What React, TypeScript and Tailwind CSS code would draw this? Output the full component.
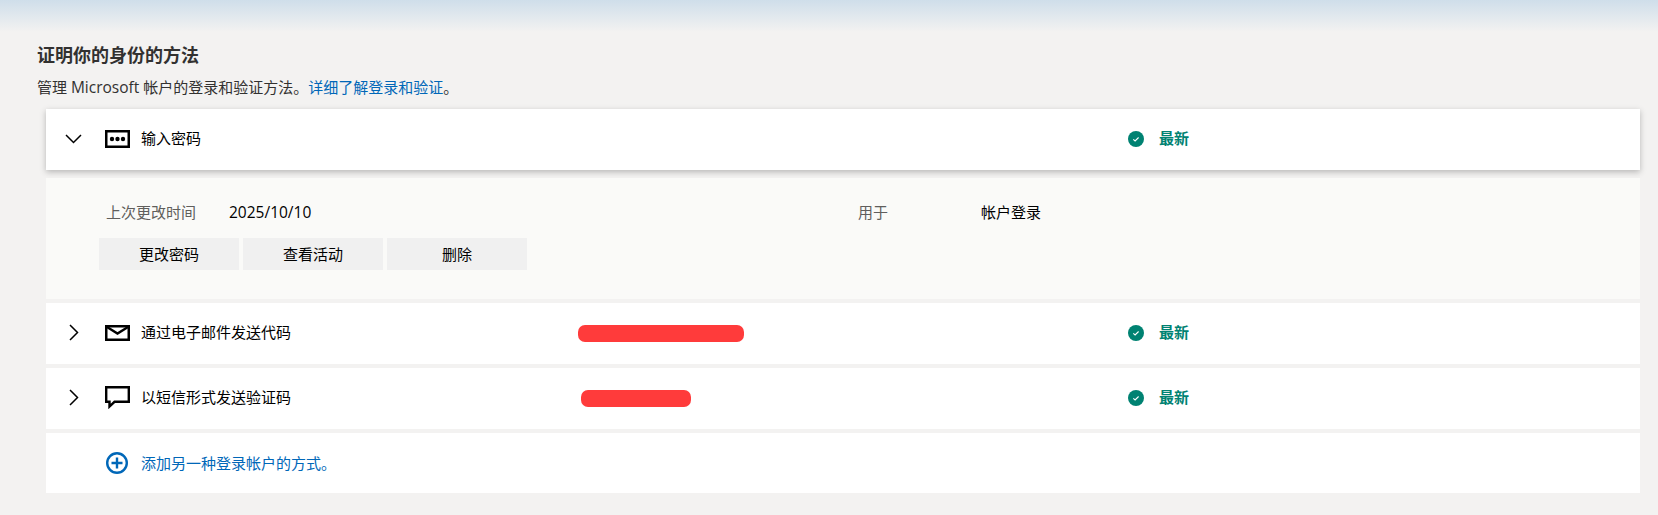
const CJK = `font-['Open_Sans','Noto_Sans_CJK_SC',sans-serif]`

function ChevronDown() {
  return (
    <svg width="17" height="10" viewBox="0 0 17 10" fill="none" stroke="#000" strokeWidth="1.5">
      <path d="M1 1l7.5 7.5L16 1" />
    </svg>
  )
}

function ChevronRight() {
  return (
    <svg width="10" height="17" viewBox="0 0 10 17" fill="none" stroke="#000" strokeWidth="1.5">
      <path d="M1 1l7.5 7.5L1 16" />
    </svg>
  )
}

function PasswordIcon() {
  return (
    <svg width="25" height="18" viewBox="0 0 25 18">
      <rect x="1.25" y="1.25" width="22.5" height="15.5" fill="none" stroke="#000" strokeWidth="2.5" />
      <circle cx="7" cy="9" r="2.2" />
      <circle cx="12.5" cy="9" r="2.2" />
      <circle cx="18" cy="9" r="2.2" />
    </svg>
  )
}

function MailIcon() {
  return (
    <svg width="25" height="16" viewBox="0 0 25 16" fill="none" stroke="#000">
      <rect x="1.25" y="1.25" width="22.5" height="13.5" strokeWidth="2.5" />
      <path d="M2 2l10.5 6.5L23 2" strokeWidth="2.4" />
    </svg>
  )
}

function ChatIcon() {
  return (
    <svg width="25" height="23" viewBox="0 0 25 23" fill="none" stroke="#000" strokeWidth="2.4">
      <path d="M1.2 1.2h22.6v14.6H9.5L4.5 20.5v-4.7H1.2z" />
    </svg>
  )
}

function PlusIcon() {
  return (
    <svg width="22" height="22" viewBox="0 0 22 22" fill="none" stroke="#0067b8">
      <circle cx="11" cy="11" r="9.8" strokeWidth="2.4" />
      <path d="M11 5.5v11M5.5 11h11" strokeWidth="2.4" />
    </svg>
  )
}

function CheckBadge() {
  return (
    <svg width="16" height="16" viewBox="0 0 16 16">
      <circle cx="8" cy="8" r="8" fill="#008272" />
      <path d="M5.3 8.3l1.8 1.6 3.5-3.4" fill="none" stroke="#fff" strokeWidth="1.1" />
    </svg>
  )
}

type MethodRowProps = {
  open?: boolean
  icon: React.ReactNode
  title: string
  // redacted value: width of the blot, offset from the column start
  blot?: string
  raised?: boolean
}

function MethodRow({ open, icon, title, blot, raised }: MethodRowProps) {
  return (
    <div className={`flex h-[61px] items-center bg-white pb-[2px] ${raised ? 'shadow-[0_2px_6px_rgba(0,0,0,0.25)]' : ''}`}>
      <div className="flex w-[59px] justify-center pr-[4px]">{open ? <ChevronDown /> : <ChevronRight />}</div>
      <div className="w-[36px]">{icon}</div>
      <div className="w-[437px] text-[15px] text-black">{title}</div>
      <div className="w-[550px]">{blot && <div className={blot} />}</div>
      <div className="flex items-center gap-[15px]">
        <CheckBadge />
        <span className="text-[15px] font-bold text-[#008272]">最新</span>
      </div>
    </div>
  )
}

export default function App() {
  return (
    <div className={`h-[515px] bg-[#f3f2f1] bg-[linear-gradient(#cfdeea_0px,#f3f2f1_32px)] pt-[43px] pr-[18px] pl-[37px] ${CJK}`}>
      <h2 className="text-[18px] leading-[24px] font-bold text-[#323130]">证明你的身份的方法</h2>
      <p className="mt-[9px] text-[15px] leading-[22px] text-[#323130]">
        管理 <span className="text-[15.5px]">Microsoft</span> 帐户的登录和验证方法。
        <a className="text-[#0067b8]">详细了解登录和验证</a>。
      </p>

      <div className="mt-[11px] ml-[9px] flex flex-col gap-[4px]">
        <div className="relative flex flex-col gap-[8px]">
          <MethodRow open raised icon={<PasswordIcon />} title="输入密码" />
          <div className="h-[121px] bg-[#fafaf8] pt-[22px] pl-[53px]">
            <div className="flex h-[24px] items-center pl-[7px] text-[15px]">
              <span className="w-[123px] text-[#605e5c]">上次更改时间</span>
              <span className="w-[629px] pt-[2px] text-[15.5px] text-black">2025/10/10</span>
              <span className="w-[123px] text-[#605e5c]">用于</span>
              <span className="text-black">帐户登录</span>
            </div>
            <div className="mt-[14px] flex gap-[4px]">
              {['更改密码', '查看活动', '删除'].map((label) => (
                <button key={label} type="button" className="h-[32px] w-[140px] bg-[#f0f0f0] text-[15px] text-black">
                  {label}
                </button>
              ))}
            </div>
          </div>
        </div>
        <MethodRow
          icon={<MailIcon />}
          title="通过电子邮件发送代码"
          blot="mt-[2px] h-[17px] w-[166px] rounded-[7px] bg-[#ff3b3b]"
        />
        <MethodRow
          icon={<ChatIcon />}
          title="以短信形式发送验证码"
          blot="mt-[2px] ml-[3px] h-[17px] w-[110px] rounded-[7px] bg-[#ff3b3b]"
        />
        <div className="flex h-[60px] items-center bg-white pl-[60px]">
          <div className="w-[35px]">
            <PlusIcon />
          </div>
          <a className="text-[15px] text-[#0067b8]">添加另一种登录帐户的方式。</a>
        </div>
      </div>
    </div>
  )
}
